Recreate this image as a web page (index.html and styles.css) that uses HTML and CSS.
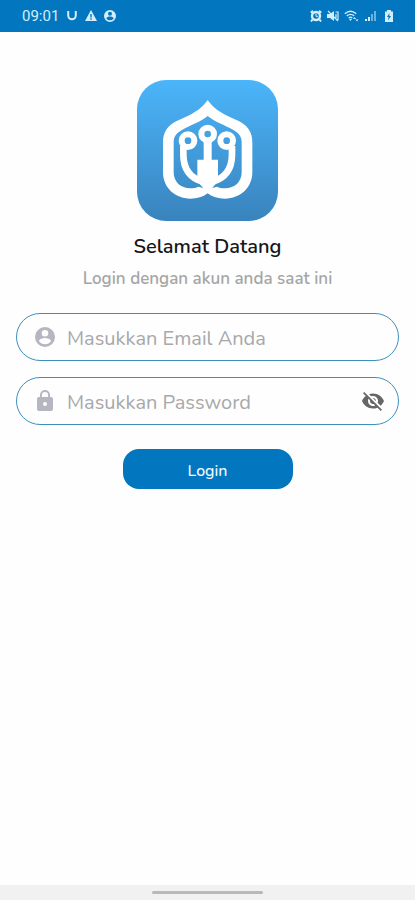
FILE: index.html
```html
<!DOCTYPE html>
<html lang="id">
<head>
<meta charset="utf-8">
<meta name="viewport" content="width=device-width, initial-scale=1">
<title>Login</title>
<link rel="stylesheet" href="styles.css">
</head>
<body>
<header class="status">
  <div class="status-group">
    <span class="clock">09:01</span>
    <svg class="status-icon" viewBox="0 0 12 12"><path d="M2.200 1v4.500a3.800 3.800 0 0 0 7.600 0V1" fill="none" stroke="currentColor" stroke-width="2"/></svg>
    <svg class="status-icon" viewBox="0 0 12 12"><path fill="currentColor" fill-rule="evenodd" d="M6 0l6 11H0zM5.300 4v3.400h1.400V4zm0 4.300v1.400h1.400V8.300z"/></svg>
    <svg class="status-icon" viewBox="2 2 20 20"><path fill="currentColor" d="M12 2a10 10 0 1 0 0 20 10 10 0 0 0 0-20zm0 3a3.300 3.300 0 1 1 0 6.600A3.300 3.300 0 0 1 12 5zm0 14.200a7.200 7.200 0 0 1-6-3.200c0-2 4-3.100 6-3.100s6 1.100 6 3.100a7.200 7.200 0 0 1-6 3.200z"/></svg>
  </div>
  <div class="status-group status-right">
    <svg class="status-icon" viewBox="0 0 12 12"><path d="M.8 2.800L3 .8M11.200 2.800L9 .8M2.500 9.500L1 11.500M9.500 9.500l1.500 2" stroke="currentColor" stroke-width="2"/><circle cx="6" cy="6" r="4" fill="none" stroke="currentColor" stroke-width="2.400"/><path d="M6 3.500V6.300H8" fill="none" stroke="currentColor"/></svg>
    <svg class="status-icon" viewBox="0 0 12 12"><path fill="currentColor" d="M0 4h3l4-3v10L3 8H0z"/><path d="M1 1l10 10M8.500 2h2.500v8M9 4v4" fill="none" stroke="currentColor" stroke-width="1.200"/></svg>
    <svg class="status-icon wide" viewBox="0 0 15 12"><path d="M.8 3.700q5.700-5 11.400 0M2.800 5.900q3.700-3 7.400 0M4.700 8q1.800-1.400 3.600 0" fill="none" stroke="currentColor" stroke-width="1.400"/><path fill="currentColor" d="M5 9h3l-1.500 2zM9 9l1.500-2L12 9zM11.500 9.500h3L13 11.500z"/></svg>
    <svg class="status-icon" viewBox="0 0 12 12"><path fill="currentColor" d="M1 9h2v2H1zM4 7h2v4H4z"/><path fill="currentColor" opacity=".5" d="M7 4h2v7H7zM10 1h2v10h-2z"/></svg>
    <svg class="status-icon battery" viewBox="0 0 12 12"><path fill="currentColor" fill-rule="evenodd" d="M4 0h4v1.500h2V12H2V1.500h2zM6.500 3L4 7h1.600L5 10.500 8 6H6.300z"/></svg>
  </div>
</header>
<main class="page">
  <svg class="logo" viewBox="22 22 423 423" role="img" aria-label="Logo">
    <defs><linearGradient id="sky" x1="0" y1="0" x2="0" y2="1"><stop offset="0" stop-color="#4bb5fa"/><stop offset="1" stop-color="#3983bd"/></linearGradient></defs>
    <rect x="22" y="22" width="423" height="423" rx="88" fill="url(#sky)"/>
    <path fill="#fff" fill-rule="evenodd" d="M234 82C246 98 257 109 276 120C291 130 309 136 327 145C354 158 368 179 368 208V299C368 345 332 378 286 378C265 378 248 373 234 362C220 373 203 378 182 378C136 378 100 345 100 299V208C100 179 114 158 141 145C159 136 177 130 192 120C211 109 222 98 234 82zM234 130C213 148 183 157 158 171C141 180 132 191 132 208V299C132 328 153 347 182 347C192 347 199 346 206 342L234 350L262 342C269 346 276 347 286 347C315 347 336 328 336 299V208C336 191 327 180 310 171C285 157 255 148 234 130z"/>
    <g fill="none" stroke="#fff">
      <path stroke-width="20" d="M161 220V245C161 290 183 318 222 328M307 220V245C307 290 285 318 246 328"/>
      <path stroke-width="24" d="M234 203V270"/>
      <circle cx="175" cy="204" r="19" stroke-width="18"/>
      <circle cx="234" cy="184" r="19" stroke-width="18"/>
      <circle cx="291" cy="204" r="19" stroke-width="18"/>
    </g>
    <path fill="#fff" d="M203 261H265V326L234 362L203 326z"/>
  </svg>
  <h1 class="title">Selamat Datang</h1>
  <p class="subtitle">Login dengan akun anda saat ini</p>
  <form class="form">
    <div class="field">
      <svg class="field-icon" viewBox="0 0 24 24"><path fill="currentColor" d="M12 2a10 10 0 1 0 0 20 10 10 0 0 0 0-20zm0 3a3.300 3.300 0 1 1 0 6.600A3.300 3.300 0 0 1 12 5zm0 14.200a7.200 7.200 0 0 1-6-3.200c0-2 4-3.100 6-3.100s6 1.100 6 3.100a7.200 7.200 0 0 1-6 3.200z"/></svg>
      <input class="input" type="email" placeholder="Masukkan Email Anda" aria-label="Masukkan Email Anda">
    </div>
    <div class="field">
      <svg class="field-icon" viewBox="0 0 24 24"><path fill="currentColor" d="M18 8h-1V6A5 5 0 0 0 7 6v2H6a2 2 0 0 0-2 2v10a2 2 0 0 0 2 2h12a2 2 0 0 0 2-2V10a2 2 0 0 0-2-2zm-6 9a2 2 0 1 1 0-4 2 2 0 0 1 0 4zm3.100-9H8.900V6a3.100 3.100 0 0 1 6.200 0z"/></svg>
      <input class="input" type="password" placeholder="Masukkan Password" aria-label="Masukkan Password">
      <button class="reveal" type="button" aria-label="Tampilkan password">
        <svg class="field-icon" viewBox="0 0 24 24"><path fill="currentColor" d="M12 7c2.760 0 5 2.240 5 5 0 .65-.13 1.260-.36 1.830l2.920 2.920c1.510-1.260 2.700-2.890 3.430-4.750-1.730-4.390-6-7.500-11-7.500-1.400 0-2.740.25-3.980.7l2.160 2.160C10.740 7.130 11.350 7 12 7zM2 4.270l2.280 2.280.46.46C3.080 8.300 1.780 10.020 1 12c1.730 4.390 6 7.500 11 7.500 1.550 0 3.030-.3 4.380-.84l.42.42L19.730 22 21 20.730 3.270 3 2 4.270zM7.530 9.800l1.550 1.550c-.05.21-.08.43-.08.65 0 1.660 1.340 3 3 3 .22 0 .44-.03.65-.08l1.550 1.550c-.67.33-1.410.53-2.200.53-2.760 0-5-2.240-5-5 0-.79.2-1.530.53-2.200zm4.310-.78l3.150 3.150.02-.16c0-1.660-1.340-3-3-3l-.17.01z"/></svg>
      </button>
    </div>
    <button class="login" type="submit">Login</button>
  </form>
</main>
<footer class="navbar"><span class="handle"></span></footer>
</body>
</html>
```
FILE: styles.css
```css
* { box-sizing: border-box; }
body {
  display: flex;
  flex-direction: column;
  min-height: 100vh;
  margin: 0;
  background: #fefefe;
  font-family: Nunito, Lato, sans-serif;
}
.status {
  display: flex;
  align-items: center;
  justify-content: space-between;
  height: 32px;
  padding: 0 20px 0 22px;
  background: #0277bf;
  color: #d3edfb;
}
.status-group { display: flex; align-items: center; gap: 7px; }
.status-right { gap: 5px; }
.clock { font: 15px/16px Roboto, sans-serif; }
.status-icon { width: 12px; height: 12px; }
.wide { width: 15px; }
.battery { margin-left: 2px; }
.page {
  flex: 1;
  display: flex;
  flex-direction: column;
  align-items: center;
  padding: 48px 16px 16px;
}
.logo { width: 141px; height: 141px; }
.title {
  margin: 12px 0 0;
  font-size: 20px;
  font-weight: 600;
  line-height: 28px;
  color: #16161a;
}
.subtitle {
  margin: 8px 0 0;
  font-size: 17px;
  font-weight: 600;
  line-height: 20px;
  color: #a6a6a6;
}
.form {
  display: flex;
  flex-direction: column;
  align-items: center;
  gap: 16px;
  width: 100%;
  margin-top: 24px;
}
.field {
  display: flex;
  align-items: center;
  width: 100%;
  height: 48px;
  padding: 0 13px 0 16px;
  border: 1px solid #3e8fbd;
  border-radius: 24px;
  color: #b5b6bf;
}
.field-icon { flex: none; width: 24px; height: 24px; display: block; }
.input {
  flex: 1;
  min-width: 0;
  height: 32px;
  padding: 2px 10px 0;
  border: 0;
  outline: 0;
  background: transparent;
  font: 20px/24px Nunito, Lato, sans-serif;
  color: #333;
}
.input::placeholder { color: #a8a8aa; }
.reveal { padding: 0; border: 0; background: none; color: #666; }
.login {
  width: 170px;
  height: 40px;
  margin-top: 8px;
  padding: 3px 0 0;
  border: 0;
  border-radius: 16px;
  background: #0277bf;
  color: #f2faff;
  font: 500 16px/24px Nunito, Lato, sans-serif;
}
.navbar {
  display: flex;
  justify-content: center;
  height: 15px;
  padding-top: 6px;
  background: #f1f1f1;
}
.handle { width: 111px; height: 3px; border-radius: 2px; background: #b9b9b9; }
```
